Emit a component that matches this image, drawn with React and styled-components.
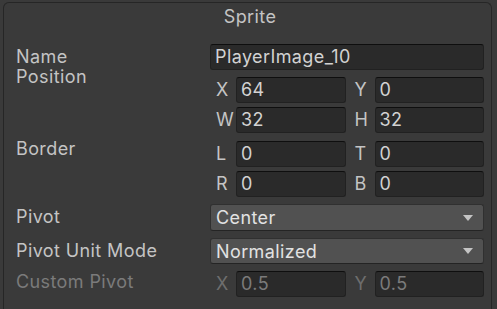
import React from "react";
import styled, { createGlobalStyle } from "styled-components";

const GlobalStyle = createGlobalStyle`
  html, body {
    margin: 0;
    padding: 0;
    background: #3a3a3a;
    width: 497px;
    height: 309px;
    overflow: hidden;
  }
  * { box-sizing: border-box; }
`;

const Panel = styled.div`
  margin: 2px 5px 0 3px;
  height: 307px;
  border: 1px solid #262626;
  border-bottom: none;
  border-radius: 6px 6px 0 0;
  background: #3a3a3a;
  padding: 1px 7px 0 12px;
  font-family: Inter, "Noto Sans", sans-serif;
  font-size: 18px;
  letter-spacing: 0.4px;
  color: #c4c4c4;
`;

const Title = styled.div`
  height: 26px;
  line-height: 26px;
  text-align: center;
  color: #c4c4c4;
  margin-bottom: 14px;
`;

const Row = styled.div`
  display: flex;
  align-items: flex-start;
  margin-top: ${(p) => p.$gap || 0}px;
`;

const Label = styled.div`
  width: 194px;
  flex: none;
  height: 26px;
  line-height: 26px;
  white-space: nowrap;
  color: ${(p) => (p.$disabled ? "#7b7b7b" : "#c4c4c4")};
  margin-top: ${(p) => p.$shift || 0}px;
`;

const Control = styled.div`
  flex: 1;
  display: flex;
  flex-direction: column;
  gap: ${(p) => p.$gap || 0}px;
`;

const TextField = styled.div`
  height: 26px;
  line-height: 24px;
  padding: 0 4px;
  background: #2a2a2a;
  border: 1px solid #212121;
  border-top-color: #0e0e0e;
  border-radius: 3px;
  color: ${(p) => (p.$disabled ? "#7b7b7b" : "#d2d2d2")};
  white-space: nowrap;
  overflow: hidden;
`;

const Pair = styled.div`
  display: grid;
  grid-template-columns: 1fr 1fr;
  gap: 3px;
`;

const Axis = styled.div`
  display: flex;
  align-items: center;
`;

const AxisLetter = styled.span`
  width: 26px;
  flex: none;
  padding-left: 6px;
  line-height: 26px;
  color: ${(p) => (p.$disabled ? "#6e6e6e" : "#c4c4c4")};
`;

const AxisField = styled(TextField)`
  flex: 1;
`;

const Dropdown = styled.div`
  display: flex;
  align-items: center;
  justify-content: space-between;
  height: ${(p) => p.$h || 26}px;
  padding: 0 10px 0 5px;
  background: #515151;
  border: 1px solid #303030;
  border-bottom-color: #242424;
  border-radius: 3px;
  color: #e2e2e2;
`;

const Arrow = styled.span`
  width: 0;
  height: 0;
  border-left: 5px solid transparent;
  border-right: 5px solid transparent;
  border-top: 6px solid #c4c4c4;
`;

function Vec({ a, av, b, bv, disabled }) {
  return (
    <Pair>
      <Axis>
        <AxisLetter $disabled={disabled}>{a}</AxisLetter>
        <AxisField $disabled={disabled}>{av}</AxisField>
      </Axis>
      <Axis>
        <AxisLetter $disabled={disabled}>{b}</AxisLetter>
        <AxisField $disabled={disabled}>{bv}</AxisField>
      </Axis>
    </Pair>
  );
}

export default function App() {
  return (
    <>
      <GlobalStyle />
      <Panel>
        <Title>Sprite</Title>

        <Row>
          <Label>Name</Label>
          <Control>
            <TextField>PlayerImage_10</TextField>
          </Control>
        </Row>

        <Row $gap={7}>
          <Label $shift={-13}>Position</Label>
          <Control $gap={4}>
            <Vec a="X" av="64" b="Y" bv="0" />
            <Vec a="W" av="32" b="H" bv="32" />
          </Control>
        </Row>

        <Row $gap={8}>
          <Label $shift={-5}>Border</Label>
          <Control $gap={4}>
            <Vec a="L" av="0" b="T" bv="0" />
            <Vec a="R" av="0" b="B" bv="0" />
          </Control>
        </Row>

        <Row $gap={7}>
          <Label>Pivot</Label>
          <Control>
            <Dropdown $h={27}>
              Center
              <Arrow />
            </Dropdown>
          </Control>
        </Row>

        <Row $gap={7}>
          <Label>Pivot Unit Mode</Label>
          <Control>
            <Dropdown>
              Normalized
              <Arrow />
            </Dropdown>
          </Control>
        </Row>

        <Row $gap={7}>
          <Label $disabled $shift={-2}>Custom Pivot</Label>
          <Control>
            <Vec a="X" av="0.5" b="Y" bv="0.5" disabled />
          </Control>
        </Row>
      </Panel>
    </>
  );
}
